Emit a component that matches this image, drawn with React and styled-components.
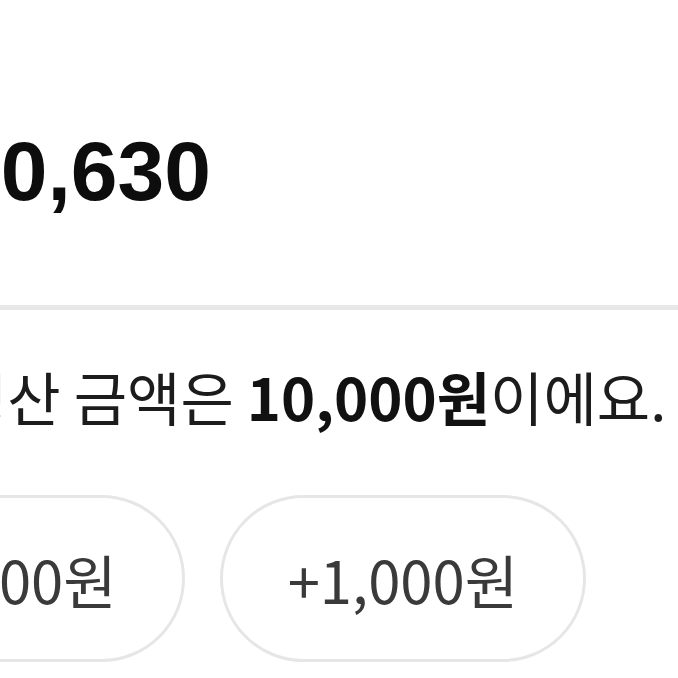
import React from 'react';
import styled, { createGlobalStyle } from 'styled-components';

const GlobalStyle = createGlobalStyle`
  html, body {
    margin: 0;
    padding: 0;
    background: #ffffff;
    overflow: hidden;
  }
  body {
    width: 678px;
    height: 678px;
    font-family: "Noto Sans CJK KR", "Liberation Sans", sans-serif;
  }
`;

const Screen = styled.div`
  width: 678px;
  height: 678px;
  overflow: hidden;
  padding-top: 129px;
  box-sizing: border-box;
`;

const Content = styled.div`
  margin-left: -46px;
  display: flex;
  flex-direction: column;
`;

const Amount = styled.div`
  font-family: "Liberation Sans", Arial, sans-serif;
  font-weight: 700;
  font-size: 84px;
  line-height: 84px;
  color: #0d0d0d;
  white-space: nowrap;
`;

const Divider = styled.div`
  margin-top: 92px;
  margin-left: -200px;
  width: 1200px;
  height: 5px;
  background-color: #e8e8e8;
`;

const Notice = styled.p`
  margin: 57px 0 0;
  font-size: 58px;
  line-height: 58px;
  color: #1c1c1c;
  white-space: nowrap;

  strong {
    font-weight: 700;
    color: #111111;
  }
`;

const ChipRow = styled.div`
  display: flex;
  gap: 35px;
  margin-top: 70px;
  margin-left: -168px;
`;

const Chip = styled.button`
  flex: none;
  height: 167px;
  box-sizing: border-box;
  border: 3px solid #e6e6e6;
  border-radius: 84px;
  background: #ffffff;
  display: flex;
  align-items: center;
  justify-content: center;
  padding: 0 65px;
  font-family: "Noto Sans CJK KR", "Liberation Sans", sans-serif;
  font-size: 58px;
  font-weight: 400;
  color: #3a3a3a;
  white-space: nowrap;
`;

const amounts = ['+10,000원', '+1,000원'];

const App = () => (
  <Screen>
    <GlobalStyle />
    <Content>
      <Amount>10,630</Amount>
      <Divider />
      <Notice>
        정산 금액은 <strong>10,000원</strong>이에요.
      </Notice>
      <ChipRow>
        {amounts.map((a) => (
          <Chip key={a}>{a}</Chip>
        ))}
      </ChipRow>
    </Content>
  </Screen>
);

export default App;
